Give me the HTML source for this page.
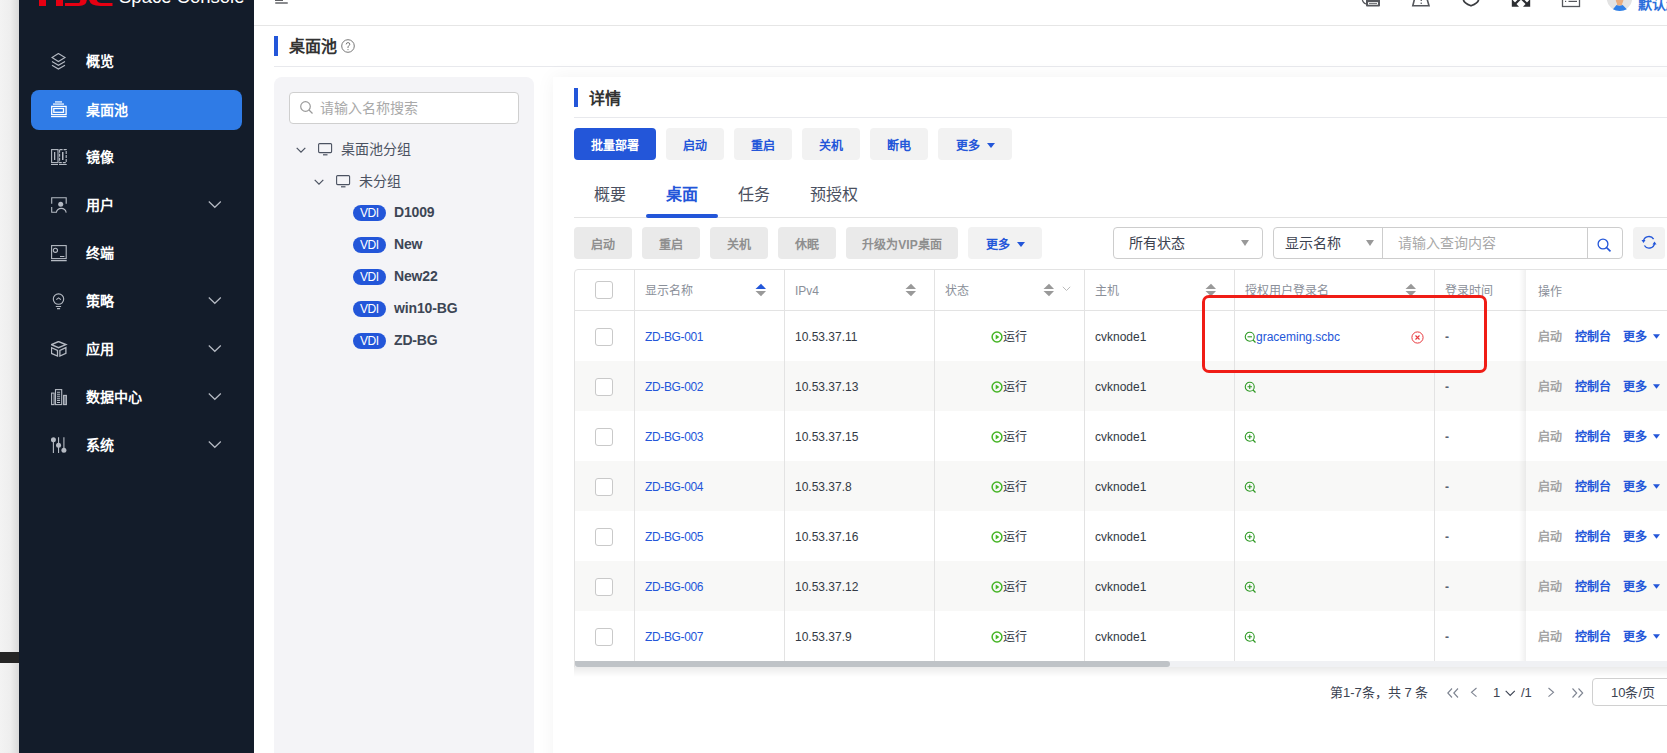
<!DOCTYPE html>
<html lang="zh-CN"><head><meta charset="utf-8">
<style>
*{box-sizing:border-box;margin:0;padding:0}
html,body{width:1667px;height:753px;overflow:hidden;background:#fff;font-family:"Liberation Sans",sans-serif;position:relative}
.abs{position:absolute}
#shadow{left:0;top:0;width:19px;height:753px;background:linear-gradient(to right,#f3f3f3 0,#eeeeee 55%,#d9d9d9 100%)}
#sidebar{left:19px;top:0;width:235px;height:753px;background:#131c2a;overflow:hidden}
.mi{position:absolute;left:12px;width:211px;height:40px;color:#fff;font-size:14px;font-weight:bold}
.mi .t{position:absolute;left:55px;top:11px;line-height:18px;white-space:nowrap}
.mi svg.ic{position:absolute;left:20px;top:12px}
.mi svg.ch{position:absolute;left:177px;top:15px}
.mi.act{background:#2f7be6;border-radius:8px}
#header{left:254px;top:0;width:1413px;height:26px;background:#fff;border-bottom:1px solid #e6e6e6}
.nw{white-space:nowrap}
.btn{position:absolute;height:32px;border-radius:4px;background:#f2f2f2;color:#2356d9;font-size:12px;font-weight:bold;line-height:30px;padding-top:3px;text-align:center;white-space:nowrap}
.btn.dis{background:#eaeaea;color:#8f8f8f}
.btn.pri{background:#2356d9;color:#fff}
.tri{display:inline-block;width:0;height:0;border-left:4px solid transparent;border-right:4px solid transparent;border-top:5px solid #2356d9;vertical-align:middle;margin-left:7px;position:relative;top:-1px}
.tab{position:absolute;top:183px;font-size:16px;color:#4a5060;line-height:24px;white-space:nowrap}
.tree{position:absolute;font-size:14px;color:#4b5261;line-height:20px;white-space:nowrap}
.vdi{position:absolute;left:353px;width:33px;height:16px;border-radius:8px;background:#2356d9;color:#fff;font-size:12px;line-height:16px;text-align:center;letter-spacing:-0.4px;text-indent:-0.4px}
.vname{position:absolute;left:394px;font-size:14px;font-weight:bold;color:#3d4655;line-height:16px;white-space:nowrap;margin-top:-1px;letter-spacing:-0.15px}
.th{position:absolute;top:271px;height:41px;font-size:12px;color:#8a8f99;line-height:41px;white-space:nowrap}
.cell{position:absolute;font-size:12px;color:#333a45;line-height:50px;white-space:nowrap;margin-top:1px}
.vl{position:absolute;width:1px;background:#e3e3e3}
.cb{position:absolute;left:595px;width:18px;height:18px;border:1px solid #c9c9c9;border-radius:3px;background:#fff}
</style></head><body>
<div id="shadow" class="abs"></div>
<div class="abs" style="left:0;top:652px;width:19px;height:11px;background:#252525"></div>
<div id="sidebar" class="abs">
<svg class="abs" style="left:0;top:0" width="235" height="10" viewBox="19 0 235 10">
<rect x="39" y="-2" width="7" height="8" fill="#e60012"/><rect x="56" y="-2" width="7" height="8" fill="#e60012"/>
<path d="M65 3.1 H79 Q80.5 3.1 80.2 -1 H87 Q86.8 5.9 79 5.9 H65Z" fill="#e60012"/>
<path d="M89 -1 H96.5 Q97 2.9 101.5 2.9 H112.5 V5.9 H100.5 Q89.5 5.9 89 -1Z" fill="#e60012"/>
</svg>
<div class="abs nw" style="left:100px;top:-12px;font-size:18.5px;line-height:18.5px;color:#fff">Space Console</div>
<div class="mi" style="top:41px"><svg class="ic" width="18" height="18" viewBox="0 0 18 18" stroke="#b5bac3" fill="#b5bac3" stroke-width="1.1"><path d="M7.4 0.5L1 4.5L7.4 8.5L14 4.5Z" fill="none"/><path d="M1 8.5L7.4 12.3L14 8.5" fill="none"/><path d="M1 12.2L7.4 16L14 12.2" fill="none"/></svg><span class="t">概览</span></div>
<div class="mi act" style="top:90px"><svg class="ic" width="18" height="20" viewBox="0 -2 18 20" style="top:10px" stroke="#fff" fill="#fff" stroke-width="1.2"><rect x="4" y="-1" width="7" height="1.8" stroke="none" fill="#b9d3f7"/><rect x="2" y="1.2" width="11" height="1.8" stroke="none" fill="#b9d3f7"/><rect x="0.7" y="4.4" width="14.4" height="8.2" fill="none" stroke-width="1.3"/><rect x="2.8" y="6.5" width="9.7" height="3.8" fill="none" stroke-width="1.3"/><rect x="0" y="14" width="15.7" height="1.2" stroke="none"/></svg><span class="t">桌面池</span></div>
<div class="mi" style="top:137px"><svg class="ic" width="18" height="18" viewBox="0 0 18 18" stroke="#b5bac3" fill="#b5bac3" stroke-width="1.1"><rect x="0.6" y="0.6" width="6.4" height="13" fill="none"/><rect x="3" y="3" width="1.3" height="8" stroke="none"/><rect x="8.6" y="0.6" width="6.6" height="13" fill="none" stroke-dasharray="3 1"/><rect x="11" y="3" width="1.5" height="8" stroke="none"/><path d="M0 15.5H7M8 15.5H15.7"/></svg><span class="t">镜像</span></div>
<div class="mi" style="top:185px"><svg class="ic" width="18" height="18" viewBox="0 0 18 18" stroke="#b5bac3" fill="#b5bac3" stroke-width="1.1"><path d="M0.7 6.7V0.8H15.2V6.7" fill="none"/><path d="M0.7 9.9V15.3H5.3" fill="none"/><circle cx="9.7" cy="7.3" r="2.5" stroke="none"/><path d="M5.3 15.6C6.5 10 14 10 15.2 15.6" fill="none"/></svg><span class="t">用户</span><svg class="ch" width="14" height="9" viewBox="0 0 14 9"><path d="M0.8 1.5L6.8 7.3L12.8 1.5" fill="none" stroke="#b5bac3" stroke-width="1.2"/></svg></div>
<div class="mi" style="top:233px"><svg class="ic" width="18" height="18" viewBox="0 0 18 18" stroke="#b5bac3" fill="#b5bac3" stroke-width="1.1"><rect x="0.6" y="0.6" width="14.6" height="13" fill="none"/><circle cx="4.4" cy="5.3" r="2.1" fill="none"/><path d="M9 11.5H13.4M0 15.6H15.7"/></svg><span class="t">终端</span></div>
<div class="mi" style="top:281px"><svg class="ic" width="18" height="18" viewBox="0 0 18 18" stroke="#b5bac3" fill="#b5bac3" stroke-width="1.1"><circle cx="7.5" cy="6.1" r="5.2" fill="none"/><path d="M5.3 6.6L7.6 4.9L9.9 6.6" fill="none"/><path d="M4.8 13.5H10.1M6 15.6H9.1"/></svg><span class="t">策略</span><svg class="ch" width="14" height="9" viewBox="0 0 14 9"><path d="M0.8 1.5L6.8 7.3L12.8 1.5" fill="none" stroke="#b5bac3" stroke-width="1.2"/></svg></div>
<div class="mi" style="top:329px"><svg class="ic" width="18" height="18" viewBox="0 0 18 18" stroke="#b5bac3" fill="#b5bac3" stroke-width="1.1"><path d="M7.5 0.6L0.6 3.6L7.5 6.6L14.8 3.6Z" fill="none" stroke-width="1.5"/><path d="M0.5 6.6V12.4L6.5 15.1V9.3Z" fill="none" stroke-width="1.3"/><path d="M8.9 9.3V15.1L14.9 12.4V6.6Z" fill="none" stroke-width="1.3"/></svg><span class="t">应用</span><svg class="ch" width="14" height="9" viewBox="0 0 14 9"><path d="M0.8 1.5L6.8 7.3L12.8 1.5" fill="none" stroke="#b5bac3" stroke-width="1.2"/></svg></div>
<div class="mi" style="top:377px"><svg class="ic" width="18" height="18" viewBox="0 0 18 18" stroke="#b5bac3" fill="#b5bac3" stroke-width="1.1"><rect x="0.6" y="4.1" width="2.5" height="11.5" fill="none"/><rect x="4.5" y="0.6" width="6.2" height="15" fill="none"/><path d="M6 3.2H9.1M6 5.2H9.1M6 7.3H9.1M6 9.3H9.1M6 11.4H9.1M6 13.5H9.1"/><rect x="12.6" y="6.4" width="2.8" height="9.2" fill="#6b7280"/></svg><span class="t">数据中心</span><svg class="ch" width="14" height="9" viewBox="0 0 14 9"><path d="M0.8 1.5L6.8 7.3L12.8 1.5" fill="none" stroke="#b5bac3" stroke-width="1.2"/></svg></div>
<div class="mi" style="top:425px"><svg class="ic" width="18" height="18" viewBox="0 0 18 18" stroke="#b5bac3" fill="#b5bac3" stroke-width="1.1"><path d="M2.4 3V16M7.55 0.2V16M12.9 0.2V11"/><circle cx="2.4" cy="2.8" r="2.5" stroke="none"/><circle cx="7.55" cy="8.3" r="2.5" stroke="none"/><circle cx="12.9" cy="13.3" r="2.5" stroke="none"/></svg><span class="t">系统</span><svg class="ch" width="14" height="9" viewBox="0 0 14 9"><path d="M0.8 1.5L6.8 7.3L12.8 1.5" fill="none" stroke="#b5bac3" stroke-width="1.2"/></svg></div>
</div>
<div id="header" class="abs">
<div class="abs" style="left:21px;top:0;width:8px;height:1px;background:#5f6064"></div>
<div class="abs" style="left:21px;top:2px;width:13px;height:2px;background:#8a8b8e;border-radius:1px"></div>
</div>
<svg class="abs" style="left:1355px;top:0" width="130" height="12" viewBox="0 0 130 12">
<path d="M7 -2 Q7.5 3 11 4" fill="none" stroke="#55575c" stroke-width="1.2"/>
<rect x="11" y="-4" width="14" height="10.5" rx="1" fill="#55575c"/>
<rect x="13" y="2.2" width="10" height="2.5" fill="#fff"/><rect x="14" y="3.1" width="8" height="0.8" fill="#55575c"/>
<path d="M60 -3 L57.8 5.8 L74 5.8 L71.5 -3" fill="none" stroke="#55575c" stroke-width="1.6"/>
<rect x="65.6" y="-3" width="1.3" height="4" fill="#55575c"/><rect x="65.6" y="2.6" width="1.3" height="1.3" fill="#55575c"/>
<path d="M108.5 -3 V0 Q109 3 116 5.8 Q123 3 123.5 0 V-3" fill="none" stroke="#3a3c40" stroke-width="1.7"/>
</svg>
<svg class="abs" style="left:1505px;top:0" width="162" height="14" viewBox="0 0 162 14">
<path d="M6.8 -1 V6.8 H14Z" fill="#2b2d31"/><path d="M10 4 L15 -1" stroke="#2b2d31" stroke-width="2.2"/><path d="M25.2 -1 V6.8 H18Z" fill="#2b2d31"/><path d="M22 4 L17 -1" stroke="#2b2d31" stroke-width="2.2"/>
<rect x="57.5" y="-3" width="17" height="9.5" fill="none" stroke="#55575c" stroke-width="1.3"/>
<rect x="60" y="0.8" width="1.2" height="1.2" fill="#55575c"/><rect x="63.5" y="0.8" width="8.5" height="1.2" fill="#55575c"/>
<circle cx="114.5" cy="-2" r="12.8" fill="#e3e3e3"/>
<path d="M110.5 -3 H118.7 Q118.5 2 117.2 3.5 V5.5 H112 V3.5 Q110.7 2 110.5 -3Z" fill="#e8ad80"/>
<path d="M108 9.2 L111.5 5 Q114.5 6.5 117.7 5 L121.8 9.2 Q119 11 114.8 11 Q110.5 11 108 9.2Z" fill="#2f80e8"/>
</svg>
<div class="abs nw" style="left:1638px;top:-3px;font-size:14px;line-height:14px;color:#2d6fdb;font-weight:bold">默认超级管理员</div>
<div class="abs" style="left:274px;top:36px;width:4px;height:20px;background:#2356d9"></div>
<div class="abs nw" style="left:289px;top:36px;font-size:16px;font-weight:bold;color:#333;line-height:22px">桌面池</div>
<svg class="abs" style="left:341px;top:39px" width="14" height="14" viewBox="0 0 14 14"><circle cx="7" cy="7" r="6.3" fill="none" stroke="#777" stroke-width="1"/><path d="M5.2 5.4 Q5.2 3.6 7 3.6 Q8.8 3.6 8.8 5.2 Q8.8 6.4 7.3 7.2 L7 7.8 V9" fill="none" stroke="#777" stroke-width="1"/><circle cx="7" cy="10.6" r="0.6" fill="#777"/></svg>
<div class="abs" style="left:274px;top:66px;width:1393px;height:1px;background:#e8e9ed"></div>
<div class="abs" style="left:274px;top:77px;width:260px;height:700px;background:#f4f4f7;border-radius:8px"></div>
<div class="abs" style="left:289px;top:92px;width:230px;height:32px;background:#fff;border:1px solid #cfcfcf;border-radius:4px"></div>
<svg class="abs" style="left:299px;top:100px" width="16" height="16" viewBox="0 0 16 16"><circle cx="6.5" cy="6.5" r="4.8" fill="none" stroke="#9a9a9a" stroke-width="1.2"/><path d="M10 10 L13.5 13.5" stroke="#9a9a9a" stroke-width="1.3"/></svg>
<div class="abs nw" style="left:320px;top:98px;font-size:14px;line-height:20px;color:#a9a9a9">请输入名称搜索</div>
<svg class="abs" style="left:296px;top:147px" width="11" height="7" viewBox="0 0 11 7"><path d="M0.7 0.8 L5 5.2 L9.3 0.8" fill="none" stroke="#4b5261" stroke-width="1.2"/></svg>
<svg class="abs" style="left:318px;top:143px" width="15" height="13" viewBox="0 0 15 13"><rect x="0.6" y="0.6" width="13" height="9" rx="1" fill="none" stroke="#4b5261" stroke-width="1.1"/><path d="M5 11.8 H9.5" stroke="#4b5261" stroke-width="1.2"/></svg>
<div class="tree" style="left:341px;top:139px">桌面池分组</div>
<svg class="abs" style="left:314px;top:179px" width="11" height="7" viewBox="0 0 11 7"><path d="M0.7 0.8 L5 5.2 L9.3 0.8" fill="none" stroke="#4b5261" stroke-width="1.2"/></svg>
<svg class="abs" style="left:336px;top:175px" width="15" height="13" viewBox="0 0 15 13"><rect x="0.6" y="0.6" width="13" height="9" rx="1" fill="none" stroke="#4b5261" stroke-width="1.1"/><path d="M5 11.8 H9.5" stroke="#4b5261" stroke-width="1.2"/></svg>
<div class="tree" style="left:359px;top:171px">未分组</div>
<div class="vdi" style="top:205px">VDI</div><div class="vname" style="top:205px">D1009</div>
<div class="vdi" style="top:237px">VDI</div><div class="vname" style="top:237px">New</div>
<div class="vdi" style="top:269px">VDI</div><div class="vname" style="top:269px">New22</div>
<div class="vdi" style="top:301px">VDI</div><div class="vname" style="top:301px">win10-BG</div>
<div class="vdi" style="top:333px">VDI</div><div class="vname" style="top:333px">ZD-BG</div>
<div class="abs" style="left:553px;top:77px;width:1200px;height:700px;background:#fff;box-shadow:0 0 18px rgba(0,0,0,0.05)"></div>
<div class="abs" style="left:574px;top:88px;width:4px;height:19px;background:#2356d9"></div>
<div class="abs nw" style="left:589px;top:87.5px;font-size:16px;font-weight:bold;color:#333;line-height:22px">详情</div>
<div class="abs" style="left:574px;top:117px;width:1093px;height:1px;background:#e8e9ed"></div>
<div class="btn pri" style="left:574px;top:128px;width:82px">批量部署</div>
<div class="btn " style="left:666px;top:128px;width:58px">启动</div>
<div class="btn " style="left:734px;top:128px;width:58px">重启</div>
<div class="btn " style="left:802px;top:128px;width:58px">关机</div>
<div class="btn " style="left:870px;top:128px;width:58px">断电</div>
<div class="btn " style="left:938px;top:128px;width:74px">更多<i class="tri"></i></div>
<div class="tab" style="left:594px;">概要</div>
<div class="tab" style="left:666px;color:#2356d9;font-weight:bold">桌面</div>
<div class="tab" style="left:738px;">任务</div>
<div class="tab" style="left:810px;">预授权</div>
<div class="abs" style="left:574px;top:217px;width:1093px;height:1px;background:#e3e3e3"></div>
<div class="abs" style="left:646px;top:214px;width:72px;height:4px;background:#2356d9;border-radius:2px"></div>
<div class="btn dis" style="left:574px;top:227px;width:58px">启动</div>
<div class="btn dis" style="left:642px;top:227px;width:58px">重启</div>
<div class="btn dis" style="left:710px;top:227px;width:58px">关机</div>
<div class="btn dis" style="left:778px;top:227px;width:58px">休眠</div>
<div class="btn dis" style="left:846px;top:227px;width:112px">升级为VIP桌面</div>
<div class="btn " style="left:968px;top:227px;width:74px">更多<i class="tri"></i></div>
<div class="abs" style="left:1113px;top:227px;width:150px;height:32px;border:1px solid #cdcdcd;border-radius:4px;background:#fff"></div>
<div class="abs nw" style="left:1129px;top:233px;font-size:14px;line-height:20px;color:#3c4250">所有状态</div>
<div class="abs" style="left:1241px;top:240px;width:0;height:0;border-left:4.5px solid transparent;border-right:4.5px solid transparent;border-top:6px solid #999"></div>
<div class="abs" style="left:1273px;top:227px;width:350px;height:32px;border:1px solid #cdcdcd;border-radius:4px;background:#fff"></div>
<div class="abs" style="left:1382px;top:228px;width:1px;height:30px;background:#cdcdcd"></div>
<div class="abs" style="left:1587px;top:228px;width:1px;height:30px;background:#cdcdcd"></div>
<div class="abs nw" style="left:1285px;top:233px;font-size:14px;line-height:20px;color:#3c4250">显示名称</div>
<div class="abs" style="left:1366px;top:240px;width:0;height:0;border-left:4.5px solid transparent;border-right:4.5px solid transparent;border-top:6px solid #999"></div>
<div class="abs nw" style="left:1398px;top:233px;font-size:14px;line-height:20px;color:#a8a8a8">请输入查询内容</div>
<svg class="abs" style="left:1597px;top:238px" width="16" height="14" viewBox="0 0 16 14"><circle cx="6" cy="6" r="4.9" fill="none" stroke="#2356d9" stroke-width="1.3"/><path d="M9.6 9.6 L13.5 13.3" stroke="#2356d9" stroke-width="1.6"/></svg>
<div class="abs" style="left:1633px;top:227px;width:32px;height:32px;border-radius:4px;background:#f2f2f2"></div>
<svg class="abs" style="left:1641px;top:235px" width="16" height="15" viewBox="0 0 16 15"><path d="M2.5 6 A5.5 5.5 0 0 1 12.6 4.2" fill="none" stroke="#2356d9" stroke-width="1.4"/><path d="M13.5 8.5 A5.5 5.5 0 0 1 3.4 10.5" fill="none" stroke="#2356d9" stroke-width="1.4"/><path d="M0.5 5 L4.5 5 L2.5 8Z" fill="#2356d9"/><path d="M11.5 9.5 L15.5 9.5 L13.5 6.5Z" fill="#2356d9"/></svg>
<div class="abs" style="left:574px;top:269px;width:1100px;height:399px;border:1px solid #e3e3e3;border-radius:4px 0 0 0;background:#fff"></div>
<div class="abs" style="left:575px;top:361px;width:1092px;height:50px;background:#f8f8f7"></div>
<div class="abs" style="left:575px;top:461px;width:1092px;height:50px;background:#f8f8f7"></div>
<div class="abs" style="left:575px;top:561px;width:1092px;height:50px;background:#f8f8f7"></div>
<div class="abs" style="left:575px;top:310px;width:1092px;height:1px;background:#e3e3e3"></div>
<div class="vl" style="left:634px;top:270px;height:391px"></div>
<div class="vl" style="left:784px;top:270px;height:391px"></div>
<div class="vl" style="left:934px;top:270px;height:391px"></div>
<div class="vl" style="left:1084px;top:270px;height:391px"></div>
<div class="vl" style="left:1234px;top:270px;height:391px"></div>
<div class="vl" style="left:1434px;top:270px;height:391px"></div>
<div class="cb" style="top:281px"></div>
<div class="th" style="left:645px">显示名称</div>
<svg class="abs" style="left:755px;top:283px" width="12" height="14" viewBox="0 0 12 14"><path d="M0.5 6 L6 0.8 L11 6Z" fill="#2356d9"/><path d="M0.5 8 L6 13.2 L11 8Z" fill="#999"/></svg>
<div class="th" style="left:795px">IPv4</div>
<svg class="abs" style="left:905px;top:283px" width="12" height="14" viewBox="0 0 12 14"><path d="M0.5 6 L6 0.8 L11 6Z" fill="#999"/><path d="M0.5 8 L6 13.2 L11 8Z" fill="#999"/></svg>
<div class="th" style="left:945px">状态</div>
<svg class="abs" style="left:1043px;top:283px" width="12" height="14" viewBox="0 0 12 14"><path d="M0.5 6 L6 0.8 L11 6Z" fill="#999"/><path d="M0.5 8 L6 13.2 L11 8Z" fill="#999"/></svg>
<div class="th" style="left:1095px">主机</div>
<svg class="abs" style="left:1205px;top:283px" width="12" height="14" viewBox="0 0 12 14"><path d="M0.5 6 L6 0.8 L11 6Z" fill="#999"/><path d="M0.5 8 L6 13.2 L11 8Z" fill="#999"/></svg>
<div class="th" style="left:1245px">授权用户登录名</div>
<svg class="abs" style="left:1405px;top:283px" width="12" height="14" viewBox="0 0 12 14"><path d="M0.5 6 L6 0.8 L11 6Z" fill="#999"/><path d="M0.5 8 L6 13.2 L11 8Z" fill="#999"/></svg>
<div class="th" style="left:1445px">登录时间</div>
<svg class="abs" style="left:1062px;top:286px" width="9" height="6" viewBox="0 0 9 6"><path d="M0.8 0.8 L4.5 4.5 L8.2 0.8" fill="none" stroke="#bbb" stroke-width="1"/></svg>
<div class="cb" style="top:327.5px"></div>
<div class="cell" style="left:645px;top:311px;color:#2356d9;letter-spacing:-0.35px">ZD-BG-001</div>
<div class="cell" style="left:795px;top:311px">10.53.37.11</div>
<svg class="abs" style="left:991px;top:331px" width="12" height="12" viewBox="0 0 12 12"><circle cx="6" cy="6" r="4.9" fill="none" stroke="#47b527" stroke-width="1.5"/><path d="M4.7 3.6 L8.4 6 L4.7 8.4Z" fill="#47b527"/></svg>
<div class="cell" style="left:1003px;top:311px">运行</div>
<div class="cell" style="left:1095px;top:311px">cvknode1</div>
<svg class="abs" style="left:1244px;top:331px" width="13" height="13" viewBox="0 0 13 13"><circle cx="5.75" cy="5.8" r="4.5" fill="none" stroke="#2f9a25" stroke-width="1.1"/><path d="M3.5 5.8 H8" stroke="#2f9a25" stroke-width="1.1"/><path d="M9 9 L11.5 11.5" stroke="#2f9a25" stroke-width="1.2"/></svg>
<div class="cell" style="left:1256px;top:311px;color:#2356d9">graceming.scbc</div>
<svg class="abs" style="left:1411px;top:331px" width="13" height="13" viewBox="0 0 13 13"><circle cx="6.5" cy="6.5" r="5.6" fill="none" stroke="#e8383d" stroke-width="1"/><path d="M4.5 4.5 L8.5 8.5 M8.5 4.5 L4.5 8.5" stroke="#e8383d" stroke-width="1.1"/></svg>
<div class="cell" style="left:1445px;top:311px;font-weight:bold;color:#5a6270">-</div>
<div class="cb" style="top:377.5px"></div>
<div class="cell" style="left:645px;top:361px;color:#2356d9;letter-spacing:-0.35px">ZD-BG-002</div>
<div class="cell" style="left:795px;top:361px">10.53.37.13</div>
<svg class="abs" style="left:991px;top:381px" width="12" height="12" viewBox="0 0 12 12"><circle cx="6" cy="6" r="4.9" fill="none" stroke="#47b527" stroke-width="1.5"/><path d="M4.7 3.6 L8.4 6 L4.7 8.4Z" fill="#47b527"/></svg>
<div class="cell" style="left:1003px;top:361px">运行</div>
<div class="cell" style="left:1095px;top:361px">cvknode1</div>
<svg class="abs" style="left:1244px;top:381px" width="13" height="13" viewBox="0 0 13 13"><circle cx="5.75" cy="5.8" r="4.5" fill="none" stroke="#2f9a25" stroke-width="1.1"/><path d="M3.5 5.8 H8 M5.75 3.5 V8" stroke="#2f9a25" stroke-width="1.1"/><path d="M9 9 L11.5 11.5" stroke="#2f9a25" stroke-width="1.2"/></svg>
<div class="cell" style="left:1445px;top:361px;font-weight:bold;color:#5a6270">-</div>
<div class="cb" style="top:427.5px"></div>
<div class="cell" style="left:645px;top:411px;color:#2356d9;letter-spacing:-0.35px">ZD-BG-003</div>
<div class="cell" style="left:795px;top:411px">10.53.37.15</div>
<svg class="abs" style="left:991px;top:431px" width="12" height="12" viewBox="0 0 12 12"><circle cx="6" cy="6" r="4.9" fill="none" stroke="#47b527" stroke-width="1.5"/><path d="M4.7 3.6 L8.4 6 L4.7 8.4Z" fill="#47b527"/></svg>
<div class="cell" style="left:1003px;top:411px">运行</div>
<div class="cell" style="left:1095px;top:411px">cvknode1</div>
<svg class="abs" style="left:1244px;top:431px" width="13" height="13" viewBox="0 0 13 13"><circle cx="5.75" cy="5.8" r="4.5" fill="none" stroke="#2f9a25" stroke-width="1.1"/><path d="M3.5 5.8 H8 M5.75 3.5 V8" stroke="#2f9a25" stroke-width="1.1"/><path d="M9 9 L11.5 11.5" stroke="#2f9a25" stroke-width="1.2"/></svg>
<div class="cell" style="left:1445px;top:411px;font-weight:bold;color:#5a6270">-</div>
<div class="cb" style="top:477.5px"></div>
<div class="cell" style="left:645px;top:461px;color:#2356d9;letter-spacing:-0.35px">ZD-BG-004</div>
<div class="cell" style="left:795px;top:461px">10.53.37.8</div>
<svg class="abs" style="left:991px;top:481px" width="12" height="12" viewBox="0 0 12 12"><circle cx="6" cy="6" r="4.9" fill="none" stroke="#47b527" stroke-width="1.5"/><path d="M4.7 3.6 L8.4 6 L4.7 8.4Z" fill="#47b527"/></svg>
<div class="cell" style="left:1003px;top:461px">运行</div>
<div class="cell" style="left:1095px;top:461px">cvknode1</div>
<svg class="abs" style="left:1244px;top:481px" width="13" height="13" viewBox="0 0 13 13"><circle cx="5.75" cy="5.8" r="4.5" fill="none" stroke="#2f9a25" stroke-width="1.1"/><path d="M3.5 5.8 H8 M5.75 3.5 V8" stroke="#2f9a25" stroke-width="1.1"/><path d="M9 9 L11.5 11.5" stroke="#2f9a25" stroke-width="1.2"/></svg>
<div class="cell" style="left:1445px;top:461px;font-weight:bold;color:#5a6270">-</div>
<div class="cb" style="top:527.5px"></div>
<div class="cell" style="left:645px;top:511px;color:#2356d9;letter-spacing:-0.35px">ZD-BG-005</div>
<div class="cell" style="left:795px;top:511px">10.53.37.16</div>
<svg class="abs" style="left:991px;top:531px" width="12" height="12" viewBox="0 0 12 12"><circle cx="6" cy="6" r="4.9" fill="none" stroke="#47b527" stroke-width="1.5"/><path d="M4.7 3.6 L8.4 6 L4.7 8.4Z" fill="#47b527"/></svg>
<div class="cell" style="left:1003px;top:511px">运行</div>
<div class="cell" style="left:1095px;top:511px">cvknode1</div>
<svg class="abs" style="left:1244px;top:531px" width="13" height="13" viewBox="0 0 13 13"><circle cx="5.75" cy="5.8" r="4.5" fill="none" stroke="#2f9a25" stroke-width="1.1"/><path d="M3.5 5.8 H8 M5.75 3.5 V8" stroke="#2f9a25" stroke-width="1.1"/><path d="M9 9 L11.5 11.5" stroke="#2f9a25" stroke-width="1.2"/></svg>
<div class="cell" style="left:1445px;top:511px;font-weight:bold;color:#5a6270">-</div>
<div class="cb" style="top:577.5px"></div>
<div class="cell" style="left:645px;top:561px;color:#2356d9;letter-spacing:-0.35px">ZD-BG-006</div>
<div class="cell" style="left:795px;top:561px">10.53.37.12</div>
<svg class="abs" style="left:991px;top:581px" width="12" height="12" viewBox="0 0 12 12"><circle cx="6" cy="6" r="4.9" fill="none" stroke="#47b527" stroke-width="1.5"/><path d="M4.7 3.6 L8.4 6 L4.7 8.4Z" fill="#47b527"/></svg>
<div class="cell" style="left:1003px;top:561px">运行</div>
<div class="cell" style="left:1095px;top:561px">cvknode1</div>
<svg class="abs" style="left:1244px;top:581px" width="13" height="13" viewBox="0 0 13 13"><circle cx="5.75" cy="5.8" r="4.5" fill="none" stroke="#2f9a25" stroke-width="1.1"/><path d="M3.5 5.8 H8 M5.75 3.5 V8" stroke="#2f9a25" stroke-width="1.1"/><path d="M9 9 L11.5 11.5" stroke="#2f9a25" stroke-width="1.2"/></svg>
<div class="cell" style="left:1445px;top:561px;font-weight:bold;color:#5a6270">-</div>
<div class="cb" style="top:627.5px"></div>
<div class="cell" style="left:645px;top:611px;color:#2356d9;letter-spacing:-0.35px">ZD-BG-007</div>
<div class="cell" style="left:795px;top:611px">10.53.37.9</div>
<svg class="abs" style="left:991px;top:631px" width="12" height="12" viewBox="0 0 12 12"><circle cx="6" cy="6" r="4.9" fill="none" stroke="#47b527" stroke-width="1.5"/><path d="M4.7 3.6 L8.4 6 L4.7 8.4Z" fill="#47b527"/></svg>
<div class="cell" style="left:1003px;top:611px">运行</div>
<div class="cell" style="left:1095px;top:611px">cvknode1</div>
<svg class="abs" style="left:1244px;top:631px" width="13" height="13" viewBox="0 0 13 13"><circle cx="5.75" cy="5.8" r="4.5" fill="none" stroke="#2f9a25" stroke-width="1.1"/><path d="M3.5 5.8 H8 M5.75 3.5 V8" stroke="#2f9a25" stroke-width="1.1"/><path d="M9 9 L11.5 11.5" stroke="#2f9a25" stroke-width="1.2"/></svg>
<div class="cell" style="left:1445px;top:611px;font-weight:bold;color:#5a6270">-</div>
<div class="abs" style="left:1519px;top:270px;width:7px;height:391px;background:linear-gradient(to right,rgba(0,0,0,0),rgba(0,0,0,0.06))"></div>
<div class="abs" style="left:1526px;top:270px;width:141px;height:391px;background:#fff"></div>
<div class="abs" style="left:1526px;top:310px;width:141px;height:1px;background:#e3e3e3"></div>
<div class="cell" style="left:1538px;top:311px;color:#a3a3a3;font-weight:bold">启动</div>
<div class="cell" style="left:1575px;top:311px;color:#2356d9;font-weight:bold">控制台</div>
<div class="cell" style="left:1623px;top:311px;color:#2356d9;font-weight:bold">更多</div>
<svg class="abs" style="left:1653px;top:334px" width="8" height="6" viewBox="0 0 8 6"><path d="M0 0.2 H7 L3.5 4.7Z" fill="#2356d9"/></svg>
<div class="abs" style="left:1526px;top:361px;width:141px;height:50px;background:#f8f8f7"></div>
<div class="cell" style="left:1538px;top:361px;color:#a3a3a3;font-weight:bold">启动</div>
<div class="cell" style="left:1575px;top:361px;color:#2356d9;font-weight:bold">控制台</div>
<div class="cell" style="left:1623px;top:361px;color:#2356d9;font-weight:bold">更多</div>
<svg class="abs" style="left:1653px;top:384px" width="8" height="6" viewBox="0 0 8 6"><path d="M0 0.2 H7 L3.5 4.7Z" fill="#2356d9"/></svg>
<div class="cell" style="left:1538px;top:411px;color:#a3a3a3;font-weight:bold">启动</div>
<div class="cell" style="left:1575px;top:411px;color:#2356d9;font-weight:bold">控制台</div>
<div class="cell" style="left:1623px;top:411px;color:#2356d9;font-weight:bold">更多</div>
<svg class="abs" style="left:1653px;top:434px" width="8" height="6" viewBox="0 0 8 6"><path d="M0 0.2 H7 L3.5 4.7Z" fill="#2356d9"/></svg>
<div class="abs" style="left:1526px;top:461px;width:141px;height:50px;background:#f8f8f7"></div>
<div class="cell" style="left:1538px;top:461px;color:#a3a3a3;font-weight:bold">启动</div>
<div class="cell" style="left:1575px;top:461px;color:#2356d9;font-weight:bold">控制台</div>
<div class="cell" style="left:1623px;top:461px;color:#2356d9;font-weight:bold">更多</div>
<svg class="abs" style="left:1653px;top:484px" width="8" height="6" viewBox="0 0 8 6"><path d="M0 0.2 H7 L3.5 4.7Z" fill="#2356d9"/></svg>
<div class="cell" style="left:1538px;top:511px;color:#a3a3a3;font-weight:bold">启动</div>
<div class="cell" style="left:1575px;top:511px;color:#2356d9;font-weight:bold">控制台</div>
<div class="cell" style="left:1623px;top:511px;color:#2356d9;font-weight:bold">更多</div>
<svg class="abs" style="left:1653px;top:534px" width="8" height="6" viewBox="0 0 8 6"><path d="M0 0.2 H7 L3.5 4.7Z" fill="#2356d9"/></svg>
<div class="abs" style="left:1526px;top:561px;width:141px;height:50px;background:#f8f8f7"></div>
<div class="cell" style="left:1538px;top:561px;color:#a3a3a3;font-weight:bold">启动</div>
<div class="cell" style="left:1575px;top:561px;color:#2356d9;font-weight:bold">控制台</div>
<div class="cell" style="left:1623px;top:561px;color:#2356d9;font-weight:bold">更多</div>
<svg class="abs" style="left:1653px;top:584px" width="8" height="6" viewBox="0 0 8 6"><path d="M0 0.2 H7 L3.5 4.7Z" fill="#2356d9"/></svg>
<div class="cell" style="left:1538px;top:611px;color:#a3a3a3;font-weight:bold">启动</div>
<div class="cell" style="left:1575px;top:611px;color:#2356d9;font-weight:bold">控制台</div>
<div class="cell" style="left:1623px;top:611px;color:#2356d9;font-weight:bold">更多</div>
<svg class="abs" style="left:1653px;top:634px" width="8" height="6" viewBox="0 0 8 6"><path d="M0 0.2 H7 L3.5 4.7Z" fill="#2356d9"/></svg>
<div class="th" style="left:1538px;margin-top:1px">操作</div>
<div class="abs" style="left:575px;top:661px;width:1092px;height:6px;background:#f0f1f4"></div>
<div class="abs" style="left:575px;top:661px;width:595px;height:6px;background:#bfc3c7;border-radius:0 3px 3px 3px"></div>
<div class="abs" style="left:574px;top:667px;width:1093px;height:10px;background:linear-gradient(#ebebeb,#fff)"></div>
<div class="abs" style="left:1202px;top:295px;width:285px;height:78px;border:3px solid #f01d16;border-radius:7px"></div>
<div class="abs nw" style="left:1330px;top:684px;font-size:13px;line-height:18px;color:#3b4352">第1-7条，共 7 条</div>
<svg class="abs" style="left:1446px;top:687px" width="140" height="12" viewBox="0 0 140 12" fill="none" stroke="#7d8390" stroke-width="1.1"><path d="M6 1.5 L1.8 6 L6 10.5 M12 1.5 L7.8 6 L12 10.5"/><path d="M30.5 1 L25.5 5.3 L30.5 9.6"/><path d="M102.5 1 L107.5 5.3 L102.5 9.6"/><path d="M126.5 1.5 L130.7 6 L126.5 10.5 M132.5 1.5 L136.7 6 L132.5 10.5"/></svg>
<div class="abs nw" style="left:1493px;top:684px;font-size:13px;line-height:18px;color:#3b4352">1</div>
<svg class="abs" style="left:1505px;top:690px" width="11" height="7" viewBox="0 0 11 7"><path d="M0.7 0.8 L5.2 5.5 L9.8 0.8" fill="none" stroke="#3b4352" stroke-width="1.1"/></svg>
<div class="abs nw" style="left:1521px;top:684px;font-size:13px;line-height:18px;color:#3b4352">/1</div>
<div class="abs" style="left:1592px;top:678px;width:90px;height:28px;border:1px solid #d0d0d0;border-radius:4px;background:#fff"></div>
<div class="abs nw" style="left:1611px;top:684px;font-size:13px;line-height:18px;color:#3b4352">10条/页</div>
</body></html>
